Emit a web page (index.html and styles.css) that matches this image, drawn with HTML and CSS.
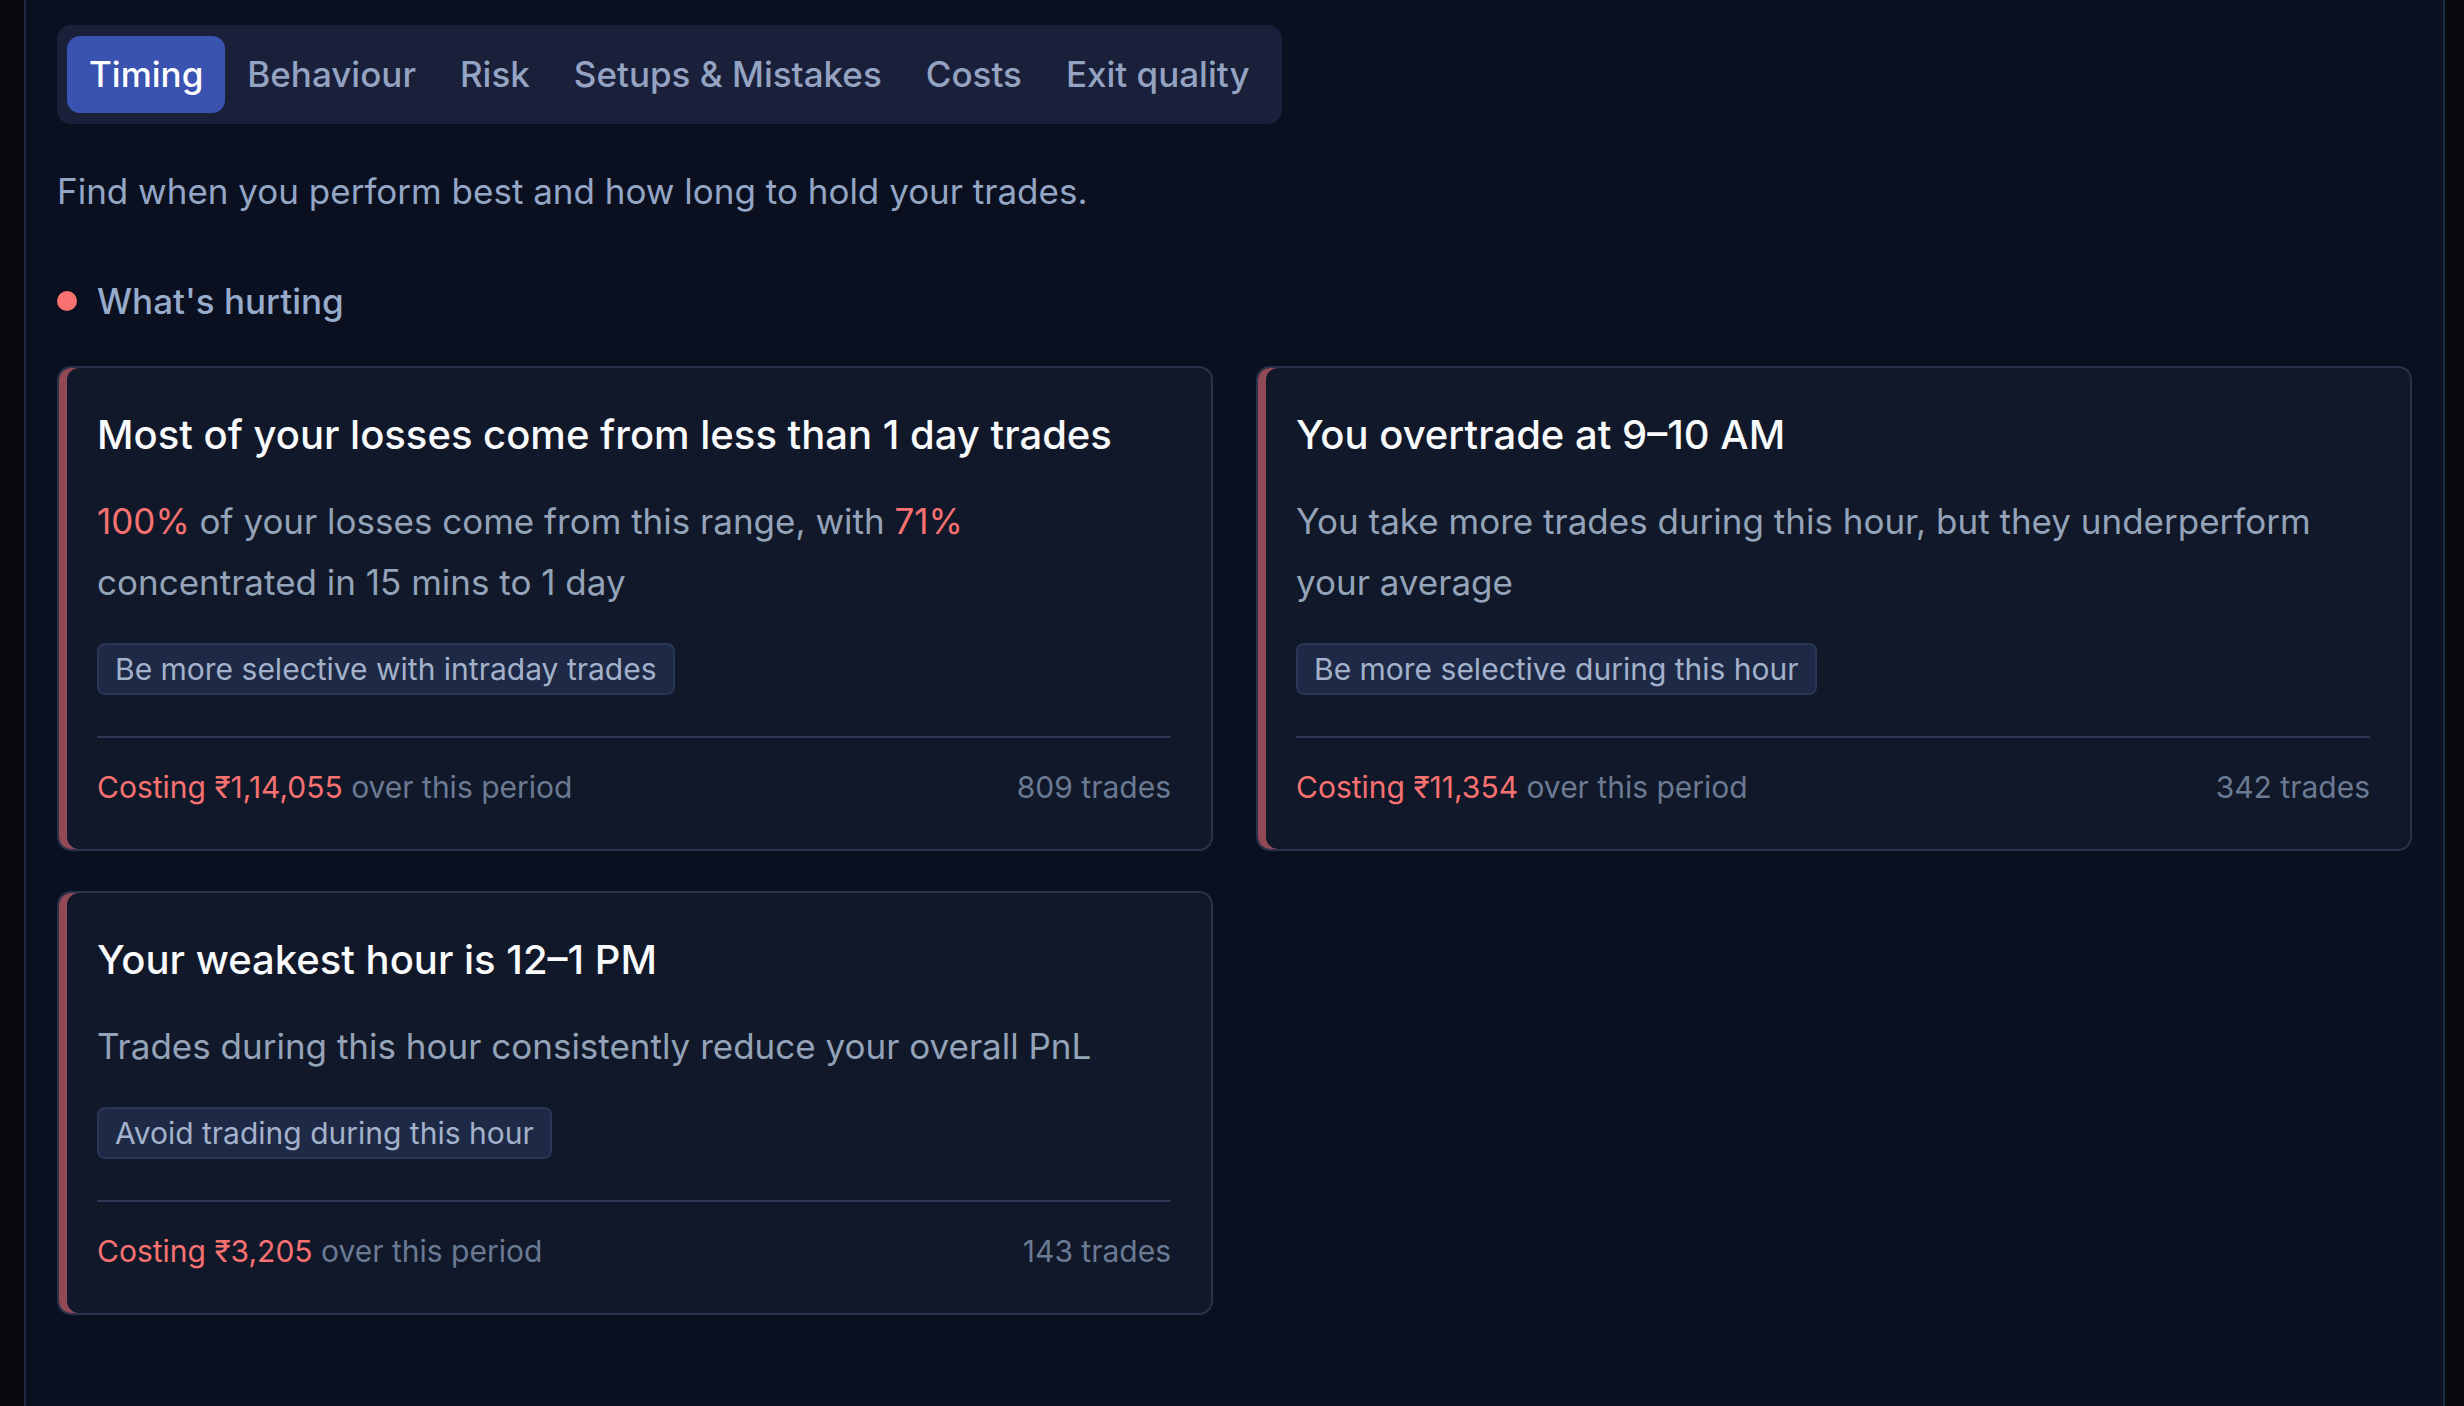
FILE: index.html
```html
<!DOCTYPE html>
<html lang="en">
  <head>
    <meta charset="UTF-8" />
    <meta name="viewport" content="width=device-width, initial-scale=1.0" />
    <title>Insights - Timing</title>
    <link rel="stylesheet" href="styles.css">
  </head>
  <body>
    <div class="panel">
      <nav class="tabs">
        <button class="tab active">Timing</button>
        <button class="tab">Behaviour</button>
        <button class="tab">Risk</button>
        <button class="tab">Setups &amp; Mistakes</button>
        <button class="tab">Costs</button>
        <button class="tab">Exit quality</button>
      </nav>

      <p class="intro">Find when you perform best and how long to hold your trades.</p>

      <h2 class="section-title"><span class="dot"></span>What's hurting</h2>

      <div class="cards">
        <div class="card">
          <h3>Most of your losses come from less than 1 day trades</h3>
          <p class="detail"><span class="hl">100%</span> of your losses come from this range, with <span class="hl">71%</span> concentrated in 15 mins to 1 day</p>
          <span class="tip">Be more selective with intraday trades</span>
          <div class="card-foot">
            <span><span class="hl">Costing ₹1,14,055</span> over this period</span>
            <span>809 trades</span>
          </div>
        </div>

        <div class="card">
          <h3>You overtrade at 9–10 AM</h3>
          <p class="detail">You take more trades during this hour, but they underperform your average</p>
          <span class="tip">Be more selective during this hour</span>
          <div class="card-foot">
            <span><span class="hl">Costing ₹11,354</span> over this period</span>
            <span>342 trades</span>
          </div>
        </div>

        <div class="card">
          <h3>Your weakest hour is 12–1 PM</h3>
          <p class="detail">Trades during this hour consistently reduce your overall PnL</p>
          <span class="tip">Avoid trading during this hour</span>
          <div class="card-foot">
            <span><span class="hl">Costing ₹3,205</span> over this period</span>
            <span>143 trades</span>
          </div>
        </div>
      </div>
    </div>
  </body>
</html>
```

FILE: styles.css
```css
html,
body {
  height: 100%;
}
body {
  margin: 0;
  background-color: #080a10;
  font-family: Inter, "Noto Sans", sans-serif;
  color: #94a3b8;
}
.panel {
  box-sizing: border-box;
  margin-left: 24px;
  width: 2421px;
  min-height: 100%;
  padding: 25px 31px 60px 31px;
  background-color: #0b1020;
  border-left: 2px solid #1f2a44;
  border-right: 2px solid #1f2a44;
}
.tabs {
  display: inline-flex;
  padding: 11px 10px;
  background-color: #1a2039;
  border-radius: 14px;
}
.tab {
  font-family: inherit;
  font-size: 35px;
  font-weight: 500;
  line-height: 77px;
  padding: 0 22px;
  color: #94a3c2;
  background: none;
  border: none;
  border-radius: 13px;
  cursor: pointer;
}
.tab.active {
  background-color: #3a53b0;
  color: #fff;
}
.intro {
  margin: 42px 0 0 0;
  font-size: 35px;
  line-height: 50px;
  color: #94a6c6;
}
.section-title {
  display: flex;
  align-items: center;
  gap: 20px;
  margin: 60px 0 0 0;
  font-size: 35px;
  font-weight: 500;
  line-height: 50px;
  color: #97abcb;
}
.dot {
  width: 20px;
  height: 20px;
  border-radius: 50%;
  background-color: #f87171;
}
.cards {
  display: grid;
  grid-template-columns: 1fr 1fr;
  column-gap: 43px;
  row-gap: 40px;
  margin-top: 40px;
}
.card {
  display: flex;
  flex-direction: column;
  align-items: flex-start;
  padding: 39px 40px 39px 38px;
  background-color: #111829;
  border: 2px solid #28324b;
  border-radius: 14px;
  box-shadow: inset 8px 0 0 #914a55;
}
.card h3 {
  margin: 0;
  font-size: 40px;
  font-weight: 500;
  line-height: 56px;
  color: #f8fafc;
}
.card .detail {
  margin: 28px 0 0 0;
  font-size: 35px;
  line-height: 61px;
  color: #94a3b8;
}
.hl {
  color: #f87171;
}
.tip {
  margin-top: 30px;
  padding: 0 16px;
  font-size: 30px;
  line-height: 48px;
  color: #a3b2ca;
  background-color: #1e2946;
  border: 2px solid #2a3655;
  border-radius: 8px;
}
.card-foot {
  align-self: stretch;
  display: flex;
  justify-content: space-between;
  margin-top: 41px;
  padding-top: 27px;
  border-top: 2px solid #2d3852;
  font-size: 30px;
  line-height: 45px;
  color: #6b7a93;
}
```
